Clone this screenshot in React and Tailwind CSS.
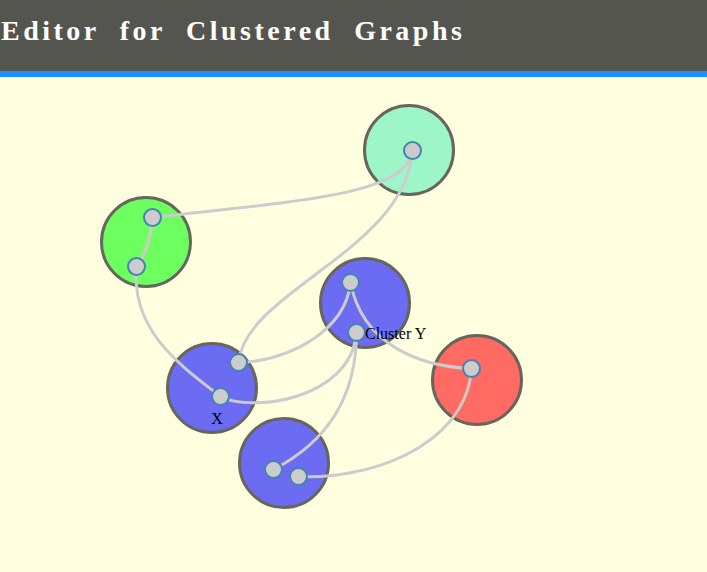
import React from "react";

const clusters = [
  { cx: 409, cy: 150, fill: "#9cf6c8" },
  { cx: 146, cy: 242, fill: "#6dff5f" },
  { cx: 365, cy: 303, fill: "#6b6cf2" },
  { cx: 212, cy: 388, fill: "#6b6cf2" },
  { cx: 284, cy: 463, fill: "#6b6cf2" },
  { cx: 477, cy: 380, fill: "#ff6b62" },
];

const nodes = [
  [412.5, 150.5],
  [152.5, 217.5],
  [136.5, 266.5],
  [350.5, 282.5],
  [356.5, 332.5],
  [238.5, 362.5],
  [220.5, 396.5],
  [273.5, 469.5],
  [298.5, 476.5],
  [471.5, 368.5],
];

const edges = [
  "M152,217 C300,200 405,195 412,150",
  "M152,217 C150,240 145,255 136,266",
  "M412,150 C405,250 245,290 238,362",
  "M136,266 C130,330 180,365 220,396",
  "M350,282 C345,330 290,360 238,362",
  "M350,282 C362,345 420,366 471,368",
  "M356,332 C350,400 250,412 220,396",
  "M356,332 C356,420 300,455 273,469",
  "M471,368 C465,450 360,480 298,476",
];

export default function App() {
  return (
    <div className="w-[707px] h-[572px] flex flex-col bg-[#ffffe0] overflow-hidden">
      <header className="h-[71px] bg-[#555550] flex items-center shrink-0">
        <h1
          className="pl-px pb-[9px] text-white font-bold text-[28px] tracking-[3.5px] [word-spacing:10px]"
          style={{ fontFamily: '"Liberation Serif", serif' }}
        >
          Editor for Clustered Graphs
        </h1>
      </header>
      <div className="h-[6px] bg-[#1e90ff] shrink-0" />
      <svg width="707" height="495" viewBox="0 77 707 495" className="block">
        {clusters.map((c, i) => (
          <circle key={i} cx={c.cx} cy={c.cy} r="44.5" fill={c.fill} stroke="#66665e" strokeWidth="3" />
        ))}
        {edges.map((d, i) => (
          <path key={i} d={d} fill="none" stroke="#cccccc" strokeWidth="3" transform="translate(0.5 0.5)" />
        ))}
        {nodes.map(([x, y], i) => (
          <circle key={i} cx={x} cy={y} r="8.5" fill="#cccccc" stroke="#4682b4" strokeWidth="2" />
        ))}
        <text x="365" y="339" fontSize="16" fontFamily="Liberation Serif, serif" fill="#000">
          Cluster Y
        </text>
        <text x="217" y="424" fontSize="16" fontFamily="Liberation Serif, serif" fill="#000" textAnchor="middle">
          X
        </text>
      </svg>
    </div>
  );
}
